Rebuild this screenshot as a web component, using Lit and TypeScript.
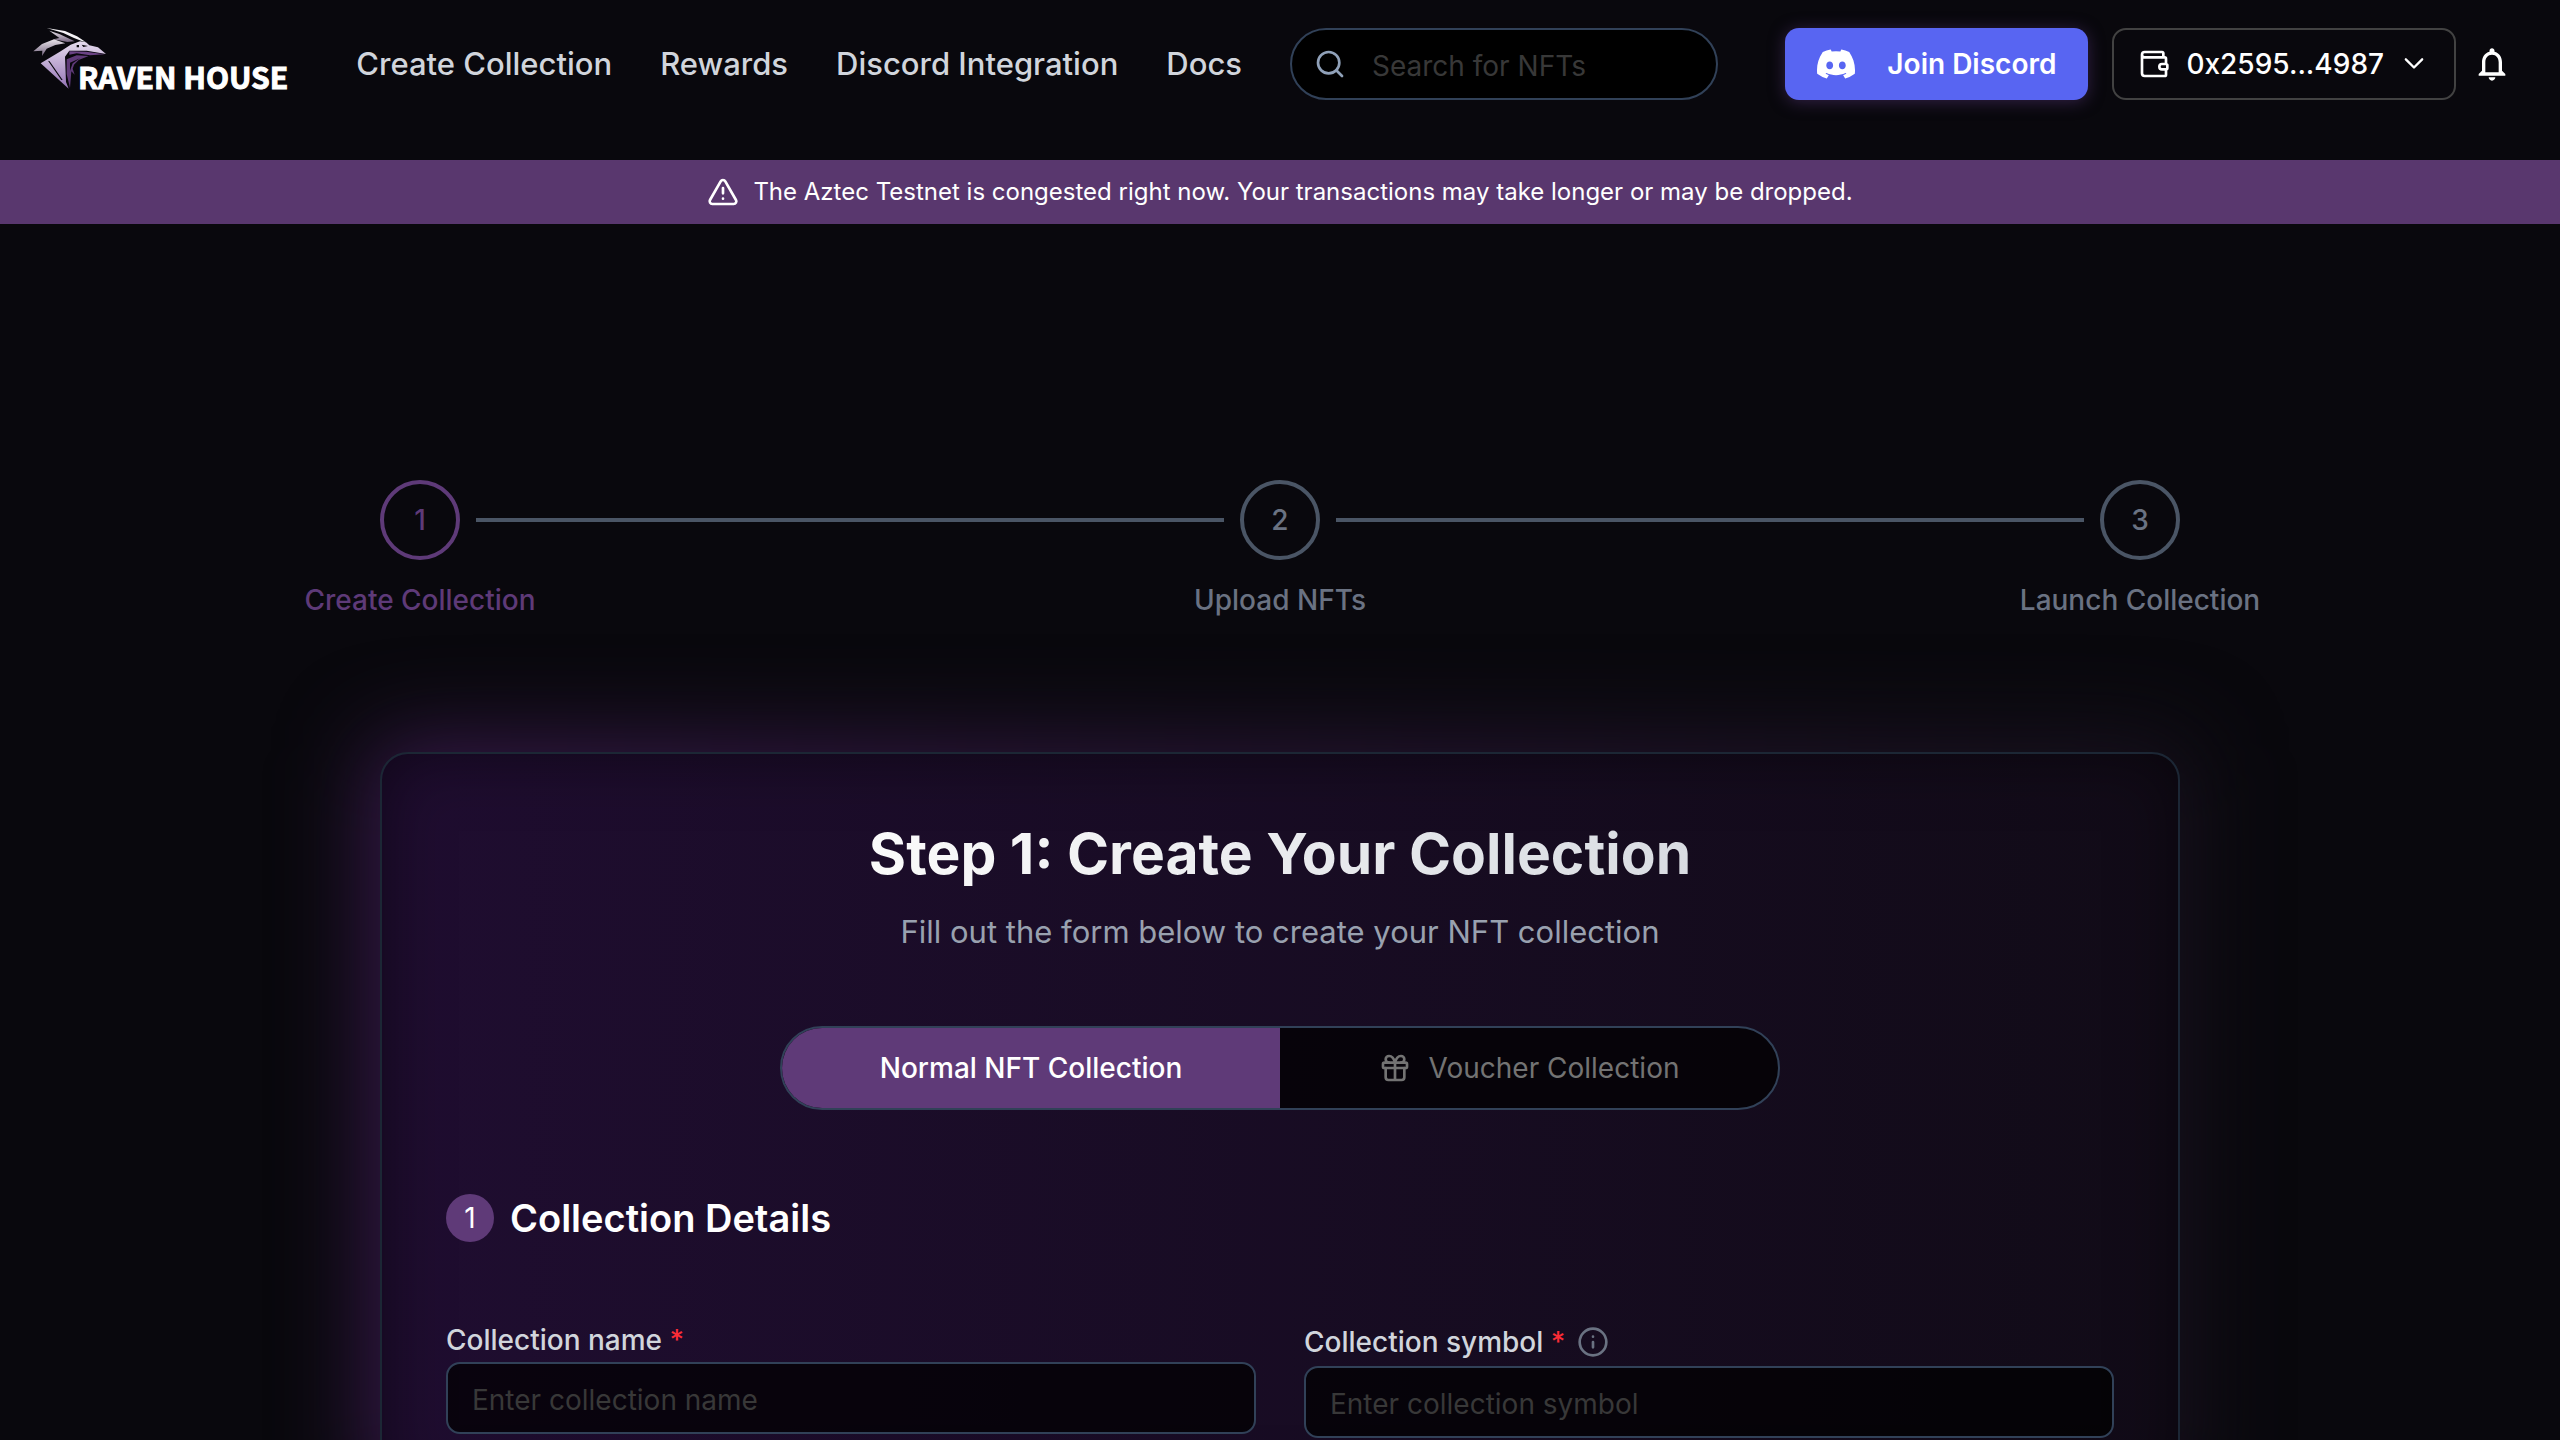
import { LitElement, html, css, svg } from "lit";
import { customElement } from "lit/decorators.js";

const discord = html`<svg class="i38" viewBox="0 0 24 24" fill="currentColor" aria-hidden="true"><path d="M20.317 4.37a19.791 19.791 0 0 0-4.885-1.515.074.074 0 0 0-.079.037c-.21.375-.444.864-.608 1.25a18.27 18.27 0 0 0-5.487 0 12.64 12.64 0 0 0-.617-1.25.077.077 0 0 0-.079-.037A19.736 19.736 0 0 0 3.677 4.37a.07.07 0 0 0-.032.027C.533 9.046-.32 13.58.099 18.057a.082.082 0 0 0 .031.057 19.9 19.9 0 0 0 5.993 3.03.078.078 0 0 0 .084-.028 14.09 14.09 0 0 0 1.226-1.994.076.076 0 0 0-.041-.106 13.107 13.107 0 0 1-1.872-.892.077.077 0 0 1-.008-.128 10.2 10.2 0 0 0 .372-.292.074.074 0 0 1 .077-.01c3.928 1.793 8.18 1.793 12.062 0a.074.074 0 0 1 .078.01c.12.098.246.198.373.292a.077.077 0 0 1-.006.127 12.299 12.299 0 0 1-1.873.892.077.077 0 0 0-.041.107c.36.698.772 1.362 1.225 1.993a.076.076 0 0 0 .084.028 19.839 19.839 0 0 0 6.002-3.03.077.077 0 0 0 .032-.054c.5-5.177-.838-9.674-3.549-13.66a.061.061 0 0 0-.031-.03zM8.02 15.33c-1.183 0-2.157-1.085-2.157-2.419 0-1.333.956-2.419 2.157-2.419 1.21 0 2.176 1.096 2.157 2.42 0 1.333-.956 2.418-2.157 2.418zm7.975 0c-1.183 0-2.157-1.085-2.157-2.419 0-1.333.955-2.419 2.157-2.419 1.21 0 2.176 1.096 2.157 2.42 0 1.333-.946 2.418-2.157 2.418z"/></svg>`;

const stroke = (cls: string, body: unknown) => html`<svg class=${cls} viewBox="0 0 24 24" fill="none" stroke="currentColor" stroke-width="2" stroke-linecap="round" stroke-linejoin="round" aria-hidden="true">${body}</svg>`;

@customElement("app-root")
export class AppRoot extends LitElement {
  static styles = css`
    :host { display: flex; flex-direction: column; height: 100vh; overflow: hidden; background: #09080d; color: #fff; font-family: Inter, "Liberation Sans", sans-serif; font-size: 28px; line-height: 40px; }
    * { box-sizing: border-box; }
    button, input { font: inherit; color: inherit; margin: 0; }
    svg { display: block; flex: none; }
    header { display: flex; align-items: center; height: 160px; flex: none; padding: 0 48px 32px 32px; }
    .brand { display: flex; align-items: flex-start; height: 72px; color: #fff; text-decoration: none; flex: none; }
    .bird { width: 76px; height: 68px; }
    .word { font: 700 30px/36px "Noto Sans CJK JP", sans-serif; -webkit-text-stroke: 1px #fff; margin: 30px 0 0 -30px; white-space: nowrap; }
    nav { display: flex; gap: 48px; margin-left: 68px; }
    nav a { color: #d1d5dc; text-decoration: none; font-size: 31px; font-weight: 500; line-height: 48px; white-space: nowrap; }
    .search { display: flex; align-items: center; gap: 26px; width: 428px; height: 72px; margin-left: 48px; padding: 0 22px; border: 2px solid #314158; border-radius: 36px; background: #000; color: #90a1b9; }
    .search input { flex: 1; min-width: 0; border: 0; background: none; outline: 0; padding: 4px 0 0; color: #fff; }
    ::placeholder { color: #383838; opacity: 1; }
    .right { display: flex; align-items: center; margin-left: auto; }
    .join { display: flex; align-items: center; gap: 32px; height: 72px; padding: 0 32px; border: 0; border-radius: 14px; background: #5865f2; font-weight: 600; box-shadow: 0 2px 16px rgba(92, 58, 128, .5); }
    .wallet { display: flex; align-items: center; gap: 16px; height: 72px; margin-left: 24px; padding: 0 26px 0 24px; border: 2px solid #424242; border-radius: 14px; background: none; font-weight: 500; }
    .bell { display: flex; border: 0; background: none; padding: 0; margin-left: 16px; }
    .i20 { width: 28px; height: 28px; }
    .i32 { width: 32px; height: 32px; }
    .i38 { width: 38px; height: 38px; }
    .i40 { width: 40px; height: 40px; }
    .banner { display: flex; align-items: center; justify-content: center; gap: 14px; height: 64px; flex: none; background: #59376e; font-size: 24px; }
    main { display: flex; flex-direction: column; width: 100%; max-width: 1800px; margin: 0 auto; flex: none; padding-top: 256px; }
    .steps { display: flex; list-style: none; margin: 0; padding: 0; justify-content: space-between; align-items: flex-start; gap: 16px; }
    .step { display: flex; flex-direction: column; align-items: center; width: 80px; gap: 20px; color: #6a7282; font-weight: 500; white-space: nowrap; }
    .dot { display: flex; align-items: center; justify-content: center; width: 80px; height: 80px; border: 4px solid #4a5565; border-radius: 50%; }
    .on { color: #5e3a78; }
    .on .dot { border-color: #5e3a78; }
    .line { flex: 1; height: 4px; margin-top: 38px; background: #4a5565; }
    .glow { position: relative; margin-top: 132px; }
    .glow::before { content: ""; position: absolute; inset: -12px -12px 0; border-radius: 32px; background: linear-gradient(90deg, #37194a, #17111d); filter: blur(44px); }
    .card { position: relative; padding: 64px; border: 2px solid #1c2735; border-radius: 28px; background: linear-gradient(90deg, #1f0d30, #110b17); box-shadow: inset 0 0 64px rgba(0, 0, 0, .5); }
    h1 { margin: 0; font-size: 57px; line-height: 72px; font-weight: 700; text-align: center; }
    h1 span { background: linear-gradient(90deg, #fafafa, #d9dce2); -webkit-background-clip: text; background-clip: text; color: transparent; }
    .sub { margin: 18px 0 70px; text-align: center; font-size: 31px; line-height: 48px; color: #99a1af; }
    .tabs { display: flex; width: 100%; max-width: 1000px; height: 84px; margin: 0 auto; border: 2px solid #314158; border-radius: 42px; overflow: hidden; background: rgba(0, 0, 0, .7); }
    .tab { display: flex; flex: 1; align-items: center; justify-content: center; gap: 18px; border: 0; background: none; color: #737373; }
    .sel { background: #5f3a78; color: #fff; font-weight: 500; }
    h2 { display: flex; align-items: center; gap: 16px; margin: 84px 0 78px; font-size: 38px; line-height: 48px; font-weight: 600; }
    .num { display: flex; align-items: center; justify-content: center; width: 48px; height: 48px; border-radius: 50%; background: #5f3a78; font-size: 28px; font-weight: 400; }
    .fields { display: grid; grid-template-columns: 1fr 1fr; gap: 48px; align-items: start; }
    .cap { display: flex; align-items: center; gap: 12px; min-height: 40px; margin-bottom: 2px; color: #d1d5dc; font-weight: 500; }
    .cap.tall { min-height: 44px; }
    .req { color: #fb2c36; }
    .info { color: #6a7282; }
    .field input { width: 100%; height: 72px; padding: 4px 24px 0; border: 2px solid #314158; border-radius: 14px; background: rgba(0, 0, 0, .7); outline: 0; }
  `;

  render() {
    return html`
      <header>
        <a class="brand" href="#" aria-label="Raven House">
          <svg class="bird" viewBox="6 12 228 204" aria-hidden="true">
            <defs>
              <linearGradient id="a" x1="0" y1="0" x2="0" y2="1"><stop offset="0" stop-color="#e8e4ea"/><stop offset="1" stop-color="#75647f"/></linearGradient>
              <linearGradient id="b" x1="0" y1="0" x2="0" y2="1"><stop offset="0" stop-color="#e6dcee"/><stop offset="1" stop-color="#9473b5"/></linearGradient>
            </defs>
            <path fill="#f4f2f5" d="M50 12 105 21 141 37 167 54 157 52 132 42 100 27z"/>
            <path fill="url(#a)" d="M58 20 88 30 134 52 112 54 70 46 88 42z"/>
            <path fill="url(#a)" d="M10 82 36 60 72 46 106 58 76 63 50 74 36 96 37 80z"/>
            <path fill="url(#b)" d="M32 118 92 82 122 62 150 52 168 55 178 64 204 70 228 90 170 80 118 80 105 98 108 174 116 194 32 118z"/>
            <path fill="#09080d" d="M54 110 59 112 98 168 94 168zM140 63h7v7h-7zM155 62 174 66 160 69z"/>
            <path fill="#6b4385" d="M118 82 168 83 224 91 180 94 140 88 118 92z"/>
            <path fill="#5f3a78" d="M110 106 140 94 176 96 146 108 132 122 128 134 134 152 124 142 120 192 110 150z"/>
            <path fill="#09080d" d="M120 116 150 103 128 118 120 140z"/>
          </svg>
          <span class="word">RAVEN HOUSE</span>
        </a>
        <nav><a href="#">Create Collection</a><a href="#">Rewards</a><a href="#">Discord Integration</a><a href="#">Docs</a></nav>
        <label class="search">${stroke("i32", svg`<circle cx="11" cy="11" r="8"/><path d="m21 21-4.3-4.3"/>`)}<input type="search" aria-label="Search for NFTs" placeholder="Search for NFTs"></label>
        <div class="right">
          <button class="join">${discord}Join Discord</button>
          <button class="wallet">${stroke("i32", svg`<path d="M19 7V4a1 1 0 0 0-1-1H5a2 2 0 0 0 0 4h15a1 1 0 0 1 1 1v4h-3a2 2 0 0 0 0 4h3a1 1 0 0 0 1-1v-2a1 1 0 0 0-1-1M3 5v14a2 2 0 0 0 2 2h15a1 1 0 0 0 1-1v-4"/>`)}0x2595...4987${stroke("i20", svg`<path d="m5 8 7 7 7-7"/>`)}</button>
          <button class="bell" aria-label="Notifications"><svg class="i40" viewBox="0 0 24 24" fill="currentColor"><path d="M12 22c1.1 0 2-.9 2-2h-4c0 1.1.9 2 2 2zm6-6v-5c0-3.07-1.63-5.64-4.5-6.32V4c0-.83-.67-1.5-1.5-1.5s-1.5.67-1.5 1.5v.68C7.64 5.36 6 7.92 6 11v5l-2 2v1h16v-1l-2-2zm-2 1H8v-6c0-2.48 1.51-4.5 4-4.5s4 2.02 4 4.5v6z"/></svg></button>
        </div>
      </header>
      <div class="banner" role="status">${stroke("i32", svg`<path d="m21.73 18-8-14a2 2 0 0 0-3.48 0l-8 14A2 2 0 0 0 4 21h16a2 2 0 0 0 1.73-3M12 9v4M12 17h.01"/>`)}<span>The Aztec Testnet is congested right now. Your transactions may take longer or may be dropped.</span></div>
      <main>
        <ol class="steps">
          <li class="step on"><span class="dot">1</span><span>Create Collection</span></li>
          <li class="line" role="presentation"></li>
          <li class="step"><span class="dot">2</span><span>Upload NFTs</span></li>
          <li class="line" role="presentation"></li>
          <li class="step"><span class="dot">3</span><span>Launch Collection</span></li>
        </ol>
        <div class="glow"><form class="card">
          <h1><span>Step 1: Create Your Collection</span></h1>
          <p class="sub">Fill out the form below to create your NFT collection</p>
          <div class="tabs">
            <button type="button" class="tab sel">Normal NFT Collection</button>
            <button type="button" class="tab">${stroke("i32", svg`<rect x="3" y="8" width="18" height="4" rx="1"/><path d="M12 8v13M19 12v7a2 2 0 0 1-2 2H7a2 2 0 0 1-2-2v-7M7.500 8a2.500 2.500 0 0 1 0-5A4.800 8 0 0 1 12 8a4.800 8 0 0 1 4.500-5 2.500 2.500 0 0 1 0 5"/>`)}Voucher Collection</button>
          </div>
          <h2><span class="num">1</span>Collection Details</h2>
          <div class="fields">
            <div class="field"><div class="cap"><label for="name">Collection name <span class="req">*</span></label></div><input id="name" placeholder="Enter collection name"></div>
            <div class="field"><div class="cap tall"><label for="symbol">Collection symbol <span class="req">*</span></label><svg class="i32 info" viewBox="0 0 24 24" fill="none" stroke="currentColor" stroke-width="2" stroke-linecap="round"><circle cx="12" cy="12" r="10"/><path d="M12 16v-4M12 8h.01"/></svg></div><input id="symbol" placeholder="Enter collection symbol"></div>
          </div>
        </form></div>
      </main>`;
  }
}
